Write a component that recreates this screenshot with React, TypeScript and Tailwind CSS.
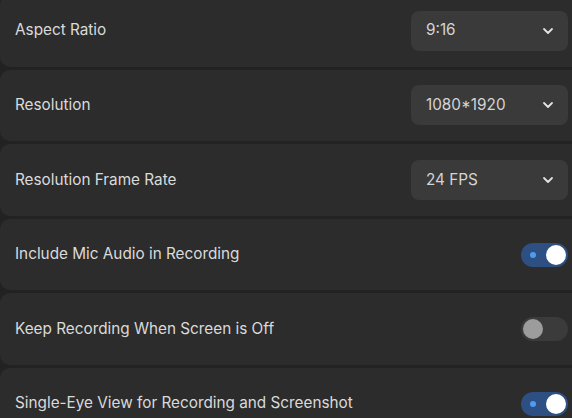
import React from "react";

function Chevron() {
  return (
    <svg width="14" height="14" viewBox="0 0 14 14" fill="none">
      <path d="M3 5l4 4 4-4" stroke="#e2e2e2" strokeWidth="1.8" strokeLinecap="round" strokeLinejoin="round" />
    </svg>
  );
}

function Select({ value }: { value: string }) {
  return (
    <div className="flex h-[40px] w-[157px] items-center justify-between rounded-[8px] bg-[#3a3a3a] pl-[15px] pr-[13px]">
      <span className="text-[15.3px] text-[#d4d4d4]">{value}</span>
      <Chevron />
    </div>
  );
}

function Toggle({ on }: { on: boolean }) {
  if (on) {
    return (
      <div className="flex h-[24px] w-[47px] items-center justify-between rounded-full bg-[#2e4f82] pl-[9px] pr-[2px]">
        <div className="h-[6px] w-[6px] rounded-full bg-[#4b9cf5]" />
        <div className="h-[20px] w-[20px] rounded-full bg-white" />
      </div>
    );
  }
  return (
    <div className="flex h-[24px] w-[47px] items-center rounded-full bg-[#3b3b3b] pl-[2px]">
      <div className="h-[20px] w-[20px] rounded-full bg-[#9c9c9c]" />
    </div>
  );
}

function Row({ label, children }: { label: string; children: React.ReactNode }) {
  return (
    <div className="flex h-[71.6px] shrink-0 items-center justify-between rounded-[10px] bg-[#2c2c2c] pl-[15px] pr-[16px]">
      <span className="text-[15.3px] text-[#dadada]">{label}</span>
      {children}
    </div>
  );
}

export default function App() {
  return (
    <div
      className="h-[418px] w-[572px] overflow-hidden bg-[#222222]"
      style={{ fontFamily: "Inter, 'Noto Sans', sans-serif" }}
    >
      <div className="-mt-[5px] flex w-[584px] flex-col gap-[3px]">
        <Row label="Aspect Ratio"><Select value="9:16" /></Row>
        <Row label="Resolution"><Select value="1080*1920" /></Row>
        <Row label="Resolution Frame Rate"><Select value="24 FPS" /></Row>
        <Row label="Include Mic Audio in Recording"><Toggle on /></Row>
        <Row label="Keep Recording When Screen is Off"><Toggle on={false} /></Row>
        <Row label="Single-Eye View for Recording and Screenshot"><Toggle on /></Row>
      </div>
    </div>
  );
}
